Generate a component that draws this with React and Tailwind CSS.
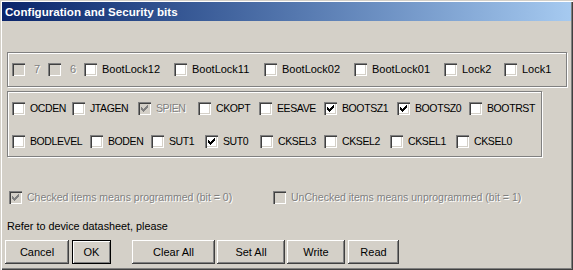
import React from 'react';

const row1 = [
  { label: '7', disabled: true, w: 'w-[36px]', gap: 'ml-[9px]' },
  { label: '6', disabled: true, w: 'w-[36px]', gap: 'ml-[9px]' },
  { label: 'BootLock12', w: 'w-[90px]' },
  { label: 'BootLock11', w: 'w-[90px]' },
  { label: 'BootLock02', w: 'w-[90px]' },
  { label: 'BootLock01', w: 'w-[90px]' },
  { label: 'Lock2', w: 'w-[60px]' },
  { label: 'Lock1', w: 'w-[60px]' },
];

const fuseRows = [
  [
    { label: 'OCDEN', w: 'w-[60px]' },
    { label: 'JTAGEN', w: 'w-[66px]' },
    { label: 'SPIEN', w: 'w-[60px]', checked: true, disabled: true },
    { label: 'CKOPT', w: 'w-[61px]' },
    { label: 'EESAVE', w: 'w-[65px]' },
    { label: 'BOOTSZ1', w: 'w-[73px]', checked: true },
    { label: 'BOOTSZ0', w: 'w-[72px]', checked: true },
    { label: 'BOOTRST', w: 'w-[70px]' },
  ],
  [
    { label: 'BODLEVEL', w: 'w-[78px]' },
    { label: 'BODEN', w: 'w-[61px]' },
    { label: 'SUT1', w: 'w-[54px]' },
    { label: 'SUT0', w: 'w-[55px]', checked: true },
    { label: 'CKSEL3', w: 'w-[64px]' },
    { label: 'CKSEL2', w: 'w-[66px]' },
    { label: 'CKSEL1', w: 'w-[66px]' },
    { label: 'CKSEL0', w: 'w-[70px]' },
  ],
];

// classic 7x7 tick, one 3px column per x
const Tick = ({ color }) => (
  <svg width="7" height="7" viewBox="0 0 7 7" shapeRendering="crispEdges">
    {[2, 3, 4, 3, 2, 1, 0].map((y, x) => (
      <rect key={x} x={x} y={y} width="1" height="3" fill={color} />
    ))}
  </svg>
);

const CheckBox = ({ checked, disabled }) => (
  <span
    className={`flex w-[13px] h-[13px] shrink-0 pl-[3px] pt-[3px] shadow-[inset_1px_1px_0_#808080,inset_2px_2px_0_#404040,inset_-1px_-1px_0_#fff,inset_-2px_-2px_0_#d4d0c8] ${
      disabled ? 'bg-[#d4d0c8]' : 'bg-white'
    }`}
  >
    {checked && <Tick color={disabled ? '#808080' : '#000'} />}
  </span>
);

const Item = ({ label, checked, disabled, w, gap = 'ml-[5px]', text = 'text-[11px]' }) => (
  <div className={`flex items-center shrink-0 ${w}`}>
    <CheckBox checked={checked} disabled={disabled} />
    <span
      className={`${gap} ${text} leading-[13px] whitespace-nowrap ${
        disabled ? 'text-[#808080] [text-shadow:1px_1px_0_#fff]' : 'text-black'
      }`}
    >
      {label}
    </span>
  </div>
);

const Button = ({ children, w, isDefault }) => (
  <div
    className={`flex items-center justify-center h-[24px] shrink-0 ${w} bg-[#d4d0c8] text-[11px] text-black ${
      isDefault
        ? 'border border-black shadow-[inset_1px_1px_0_#fff,inset_-1px_-1px_0_#808080]'
        : 'shadow-[inset_-1px_-1px_0_#404040,inset_1px_1px_0_#fff,inset_-2px_-2px_0_#808080]'
    }`}
  >
    {children}
  </div>
);

export default function App() {
  return (
    <div className="w-[573px] h-[270px] p-[2px] bg-[#d4d0c8] font-['Liberation_Sans',Arial,sans-serif] shadow-[inset_1px_1px_0_#d4d0c8,inset_2px_2px_0_#fff,inset_-1px_-1px_0_#404040,inset_-2px_-2px_0_#808080] overflow-hidden">
      {/* title bar */}
      <div className="h-[19px] flex items-center pl-[3px] bg-gradient-to-r from-[#0a246a] to-[#a6caf0]">
        <span className="text-white font-bold text-[11.6px] leading-none">Configuration and Security bits</span>
      </div>

      <div className="pl-[5px]">
        {/* lock bits */}
        <div className="mt-[31px] w-[560px] h-[35px] border border-[#808080] shadow-[inset_1px_1px_0_#fff,1px_1px_0_#fff] flex items-center pl-[4px]">
          {row1.map((it) => (
            <Item key={it.label} {...it} />
          ))}
        </div>

        {/* fuse bits */}
        <div className="mt-[4px] w-[535px] h-[66px] border border-[#808080] shadow-[inset_1px_1px_0_#fff,1px_1px_0_#fff] flex flex-col pl-[4px]">
          {fuseRows.map((r, i) => (
            <div key={i} className="flex items-center h-[33px] shrink-0">
              {r.map((it) => (
                <Item key={it.label} {...it} text="text-[10.5px] tracking-[-0.4px]" />
              ))}
            </div>
          ))}
        </div>
      </div>

      {/* legend */}
      <div className="flex items-center mt-[34px] pl-[7px]">
        <Item label="Checked items means programmed (bit = 0)" checked disabled w="w-[264px]" text="text-[10.5px]" />
        <Item label="UnChecked items means unprogrammed (bit = 1)" disabled w="w-[260px]" text="text-[10.5px]" />
      </div>

      <div className="mt-[16px] pl-[5px] text-[10.8px] leading-[13px] text-black">
        Refer to device datasheet, please
      </div>

      <div className="flex mt-[7px] pl-[3px]">
        <Button w="w-[64px]">Cancel</Button>
        <div className="ml-[3px]">
          <Button w="w-[39px]" isDefault>OK</Button>
        </div>
        <div className="ml-[21px]">
          <Button w="w-[83px]">Clear All</Button>
        </div>
        <div className="ml-[2px]">
          <Button w="w-[68px]">Set All</Button>
        </div>
        <div className="ml-[2px]">
          <Button w="w-[58px]">Write</Button>
        </div>
        <div className="ml-[3px]">
          <Button w="w-[51px]">Read</Button>
        </div>
      </div>
    </div>
  );
}
